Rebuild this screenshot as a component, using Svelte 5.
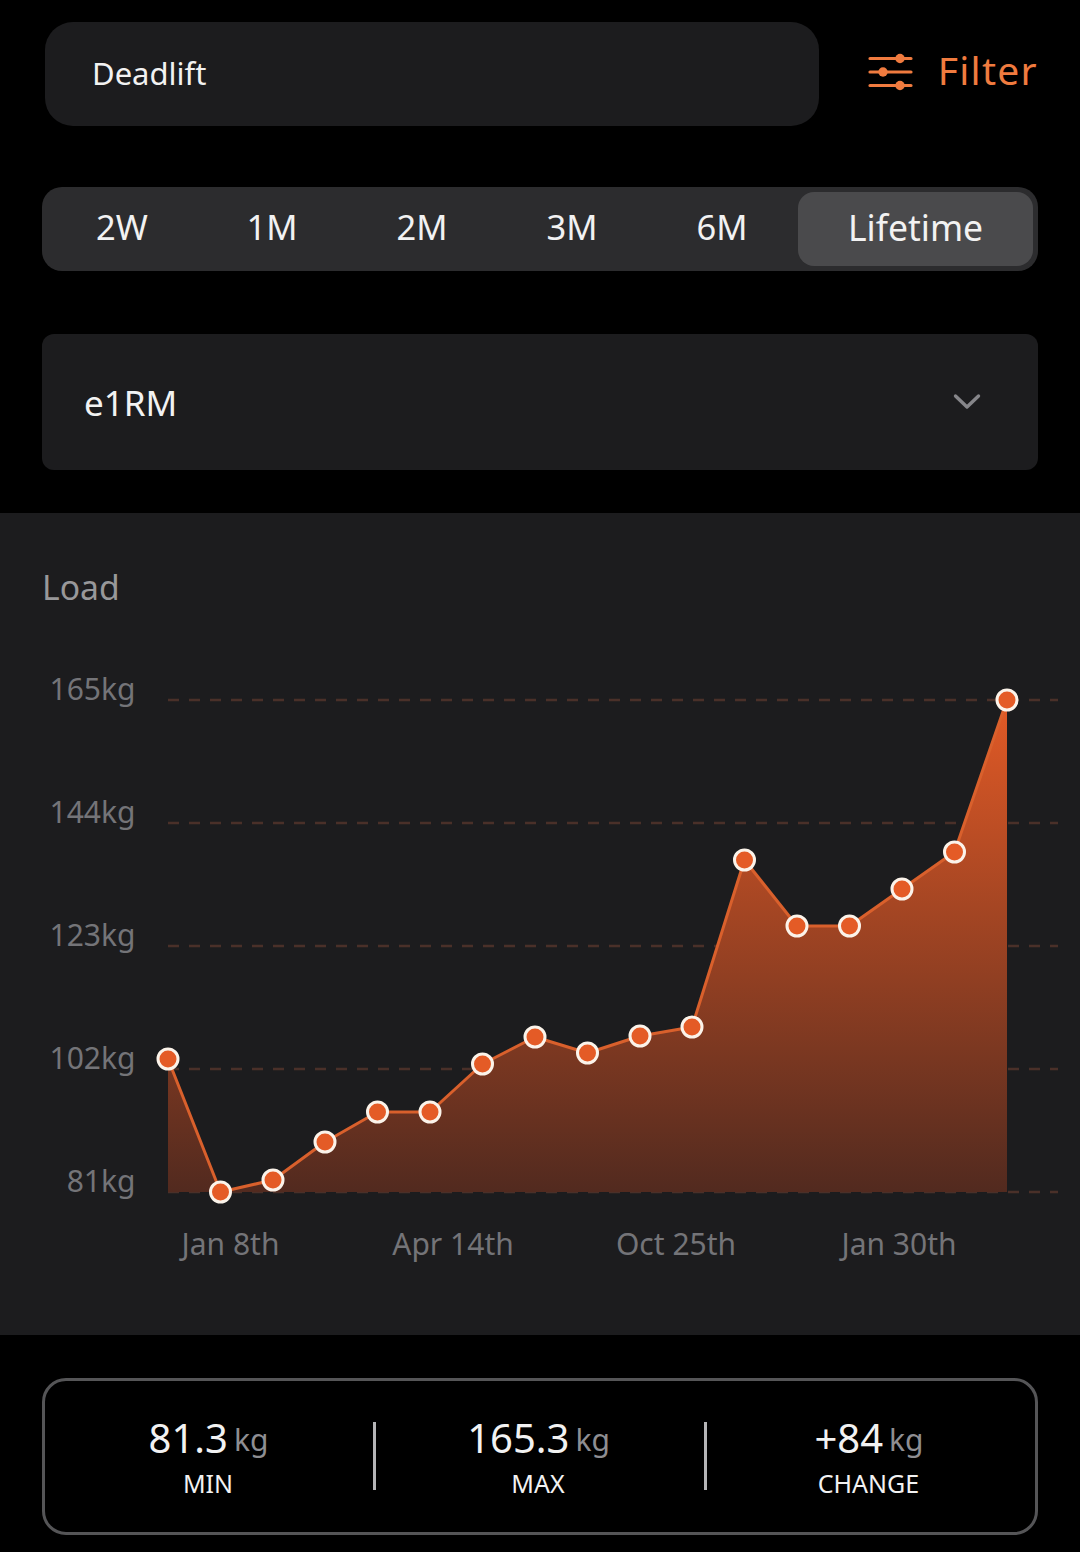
<script lang="ts">
	const ranges = ['2W', '1M', '2M', '3M', '6M', 'Lifetime'];
	const active = 'Lifetime';

	const points = [
		[168, 1059], [220.5, 1192], [273, 1180], [325, 1142], [377.5, 1112], [430, 1112],
		[482.5, 1064], [535, 1037], [587.5, 1053], [640, 1036], [692, 1027], [744.5, 860],
		[797, 926], [849.5, 926], [902, 889], [954.5, 852], [1007, 700]
	].map(([x, y]) => [x, y - 513]);

	const grid = [
		{ label: '165kg', y: 187 },
		{ label: '144kg', y: 310 },
		{ label: '123kg', y: 433 },
		{ label: '102kg', y: 556 },
		{ label: '81kg', y: 679 }
	];

	const ticks = [
		{ label: 'Jan 8th', x: 230.5 },
		{ label: 'Apr 14th', x: 453 },
		{ label: 'Oct 25th', x: 676 },
		{ label: 'Jan 30th', x: 899 }
	];

	const stats = [
		{ value: '81.3', label: 'MIN' },
		{ value: '165.3', label: 'MAX' },
		{ value: '+84', label: 'CHANGE' }
	];

	const line = points.map((p) => p.join(',')).join(' ');
	const area = `168,679 ${line} 1007,679`;
</script>

<div class="page">
	<div class="top">
		<div class="search"><span>Deadlift</span></div>
		<div class="filter">
			<svg width="46" height="38" viewBox="0 0 46 38" fill="none">
				<g stroke="#f07b3f" stroke-width="3.2" stroke-linecap="round">
					<path d="M2 5.500h41M2 19h41M2 32.500h41" />
				</g>
				<g fill="#f07b3f">
					<circle cx="32" cy="5.500" r="4.700" />
					<circle cx="15" cy="19" r="4.700" />
					<circle cx="32" cy="32.500" r="4.700" />
				</g>
			</svg>
			<span>Filter</span>
		</div>
	</div>

	<div class="ranges">
		{#each ranges as r}
			<div class="range" class:active={r === active}><span>{r}</span></div>
		{/each}
	</div>

	<div class="select">
		<span>e1RM</span>
		<svg width="28" height="18" viewBox="0 0 28 18" fill="none">
			<path d="M2.500 3l11.500 11L25.500 3" stroke="#86868a" stroke-width="3.400" stroke-linecap="round" stroke-linejoin="round" />
		</svg>
	</div>

	<section class="chart">
		<svg width="1080" height="822" viewBox="0 0 1080 822">
			<defs>
				<linearGradient id="fill" gradientUnits="userSpaceOnUse" x1="0" y1="187" x2="0" y2="679">
					<stop offset="0" stop-color="#e25a26" />
					<stop offset="1" stop-color="#522a1f" />
				</linearGradient>
			</defs>

			<text class="title" x="42" y="87">Load</text>

			{#each grid as g}
				<line class="grid" x1="168" x2="1058" y1={g.y} y2={g.y} />
				<text class="axis" x="135.500" y={g.y} text-anchor="end">{g.label}</text>
			{/each}

			<polygon points={area} fill="url(#fill)" />
			<polyline class="line" points={line} />

			{#each points as p}
				<circle class="dot" cx={p[0]} cy={p[1]} r="10" />
			{/each}

			{#each ticks as t}
				<text class="axis" x={t.x} y="742" text-anchor="middle">{t.label}</text>
			{/each}
		</svg>
	</section>

	<div class="stats">
		{#each stats as s}
			<div class="stat">
				<div class="value">{s.value}<span class="unit">kg</span></div>
				<div class="label">{s.label}</div>
			</div>
		{/each}
	</div>
</div>

<style>
	:global(body) {
		margin: 0;
		background: #000;
	}

	.page {
		width: 1080px;
		height: 1552px;
		overflow: hidden;
		background: #000;
		font-family: 'Noto Sans', 'Open Sans', sans-serif;
		color: #f2f2f2;
		padding-top: 22px;
		box-sizing: border-box;
	}

	.top {
		display: flex;
		align-items: center;
		padding: 0 42px 0 45px;
	}

	.search {
		width: 774px;
		height: 104px;
		box-sizing: border-box;
		background: #1c1c1e;
		border-radius: 28px;
		padding: 0 0 2px 47px;
		display: flex;
		align-items: center;
		font-size: 31px;
	}

	.filter {
		margin-left: auto;
		display: flex;
		align-items: center;
		gap: 24px;
		color: #f07b3f;
		font-size: 39px;
		letter-spacing: 1.300px;
	}

	.filter svg {
		margin-bottom: 4px;
	}

	.filter span {
		margin-bottom: 10px;
	}

	.ranges {
		margin: 61px 42px 0;
		height: 84px;
		box-sizing: border-box;
		padding: 5px;
		background: #2c2c2e;
		border-radius: 20px;
		display: flex;
		align-items: center;
	}

	.range {
		width: 150px;
		height: 74px;
		display: flex;
		align-items: center;
		justify-content: center;
		font-size: 34.500px;
	}

	.range span {
		margin-bottom: 5px;
	}

	.range.active {
		flex: 1;
		background: #4a4a4c;
		border-radius: 16px;
		margin-left: 1px;
		font-size: 35.500px;
	}

	.select {
		margin: 63px 42px 0;
		height: 136px;
		box-sizing: border-box;
		background: #1c1c1e;
		border-radius: 12px;
		display: flex;
		align-items: center;
		justify-content: space-between;
		padding: 0 57px 0 42px;
		font-size: 35px;
	}

	.chart {
		margin-top: 43px;
		height: 822px;
		background: #1c1c1e;
	}

	.chart svg {
		display: block;
	}

	.title {
		font-size: 33.700px;
		fill: #98989a;
	}

	.axis {
		font-size: 30px;
		fill: #747478;
	}

	.grid {
		stroke: #4a3029;
		stroke-width: 2.500;
		stroke-dasharray: 11 10;
	}

	.line {
		fill: none;
		stroke: #d9602c;
		stroke-width: 3;
		stroke-linejoin: round;
	}

	.dot {
		fill: #e45b26;
		stroke: #fbf3ea;
		stroke-width: 3;
	}

	.stats {
		margin: 43px 42px 0;
		height: 157px;
		box-sizing: border-box;
		border: 3px solid #555557;
		border-radius: 24px;
		display: grid;
		grid-template-columns: 329px 331px 1fr;
		align-items: center;
	}

	.stat {
		text-align: center;
		position: relative;
		height: 68px;
	}

	.stat + .stat::before {
		content: '';
		position: absolute;
		left: -1px;
		top: -1px;
		width: 3px;
		height: 68px;
		background: #b5b5b7;
	}

	.value {
		font-size: 40px;
		line-height: 50px;
		margin-top: -10px;
		margin-right: 2px;
	}

	.unit {
		font-size: 30px;
		color: #8e8e92;
		margin-left: 6px;
		position: relative;
		top: -2px;
	}

	.label {
		font-size: 25px;
		line-height: 33px;
		margin-right: 3px;
	}
</style>
